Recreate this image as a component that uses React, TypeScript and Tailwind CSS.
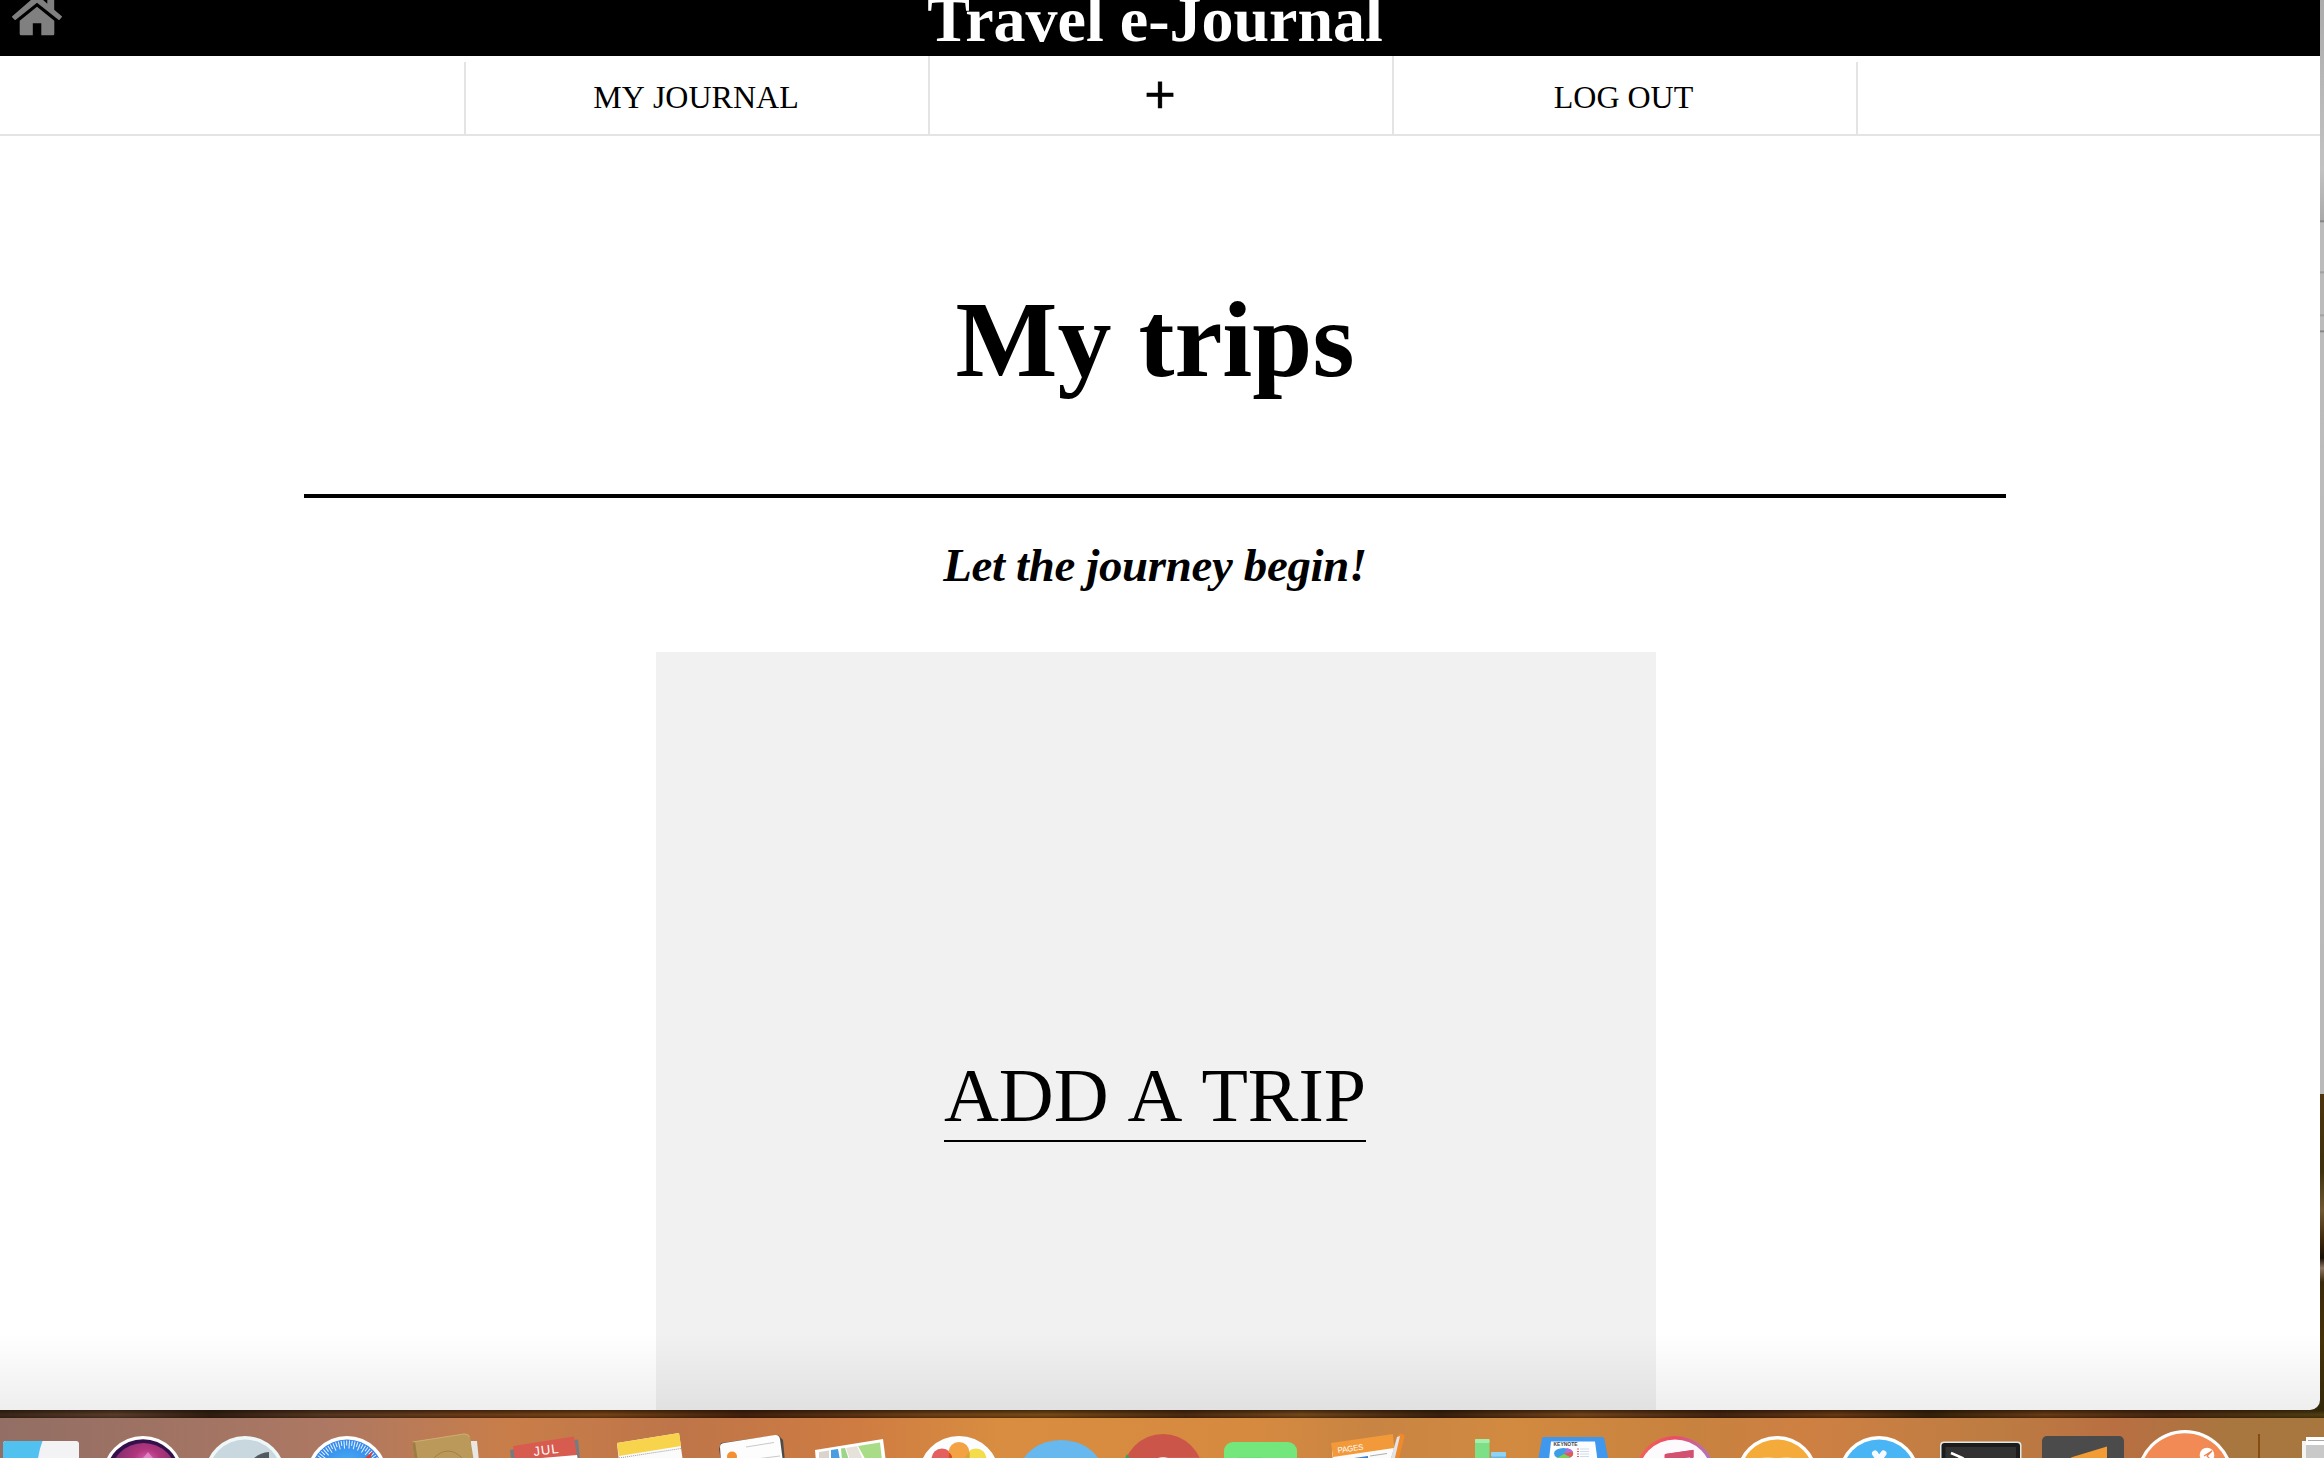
import React from "react";

type IconProps = { x: number; children: React.ReactNode };

/* One 102px dock slot; drawings use screen coordinates through the viewBox. */
function Slot({ x, children }: IconProps) {
  return (
    <svg viewBox={`${x} 1418 102 40`} className="block h-10 w-[102px] shrink-0 overflow-visible">
      {children}
    </svg>
  );
}

function HomeIcon() {
  return (
    <svg viewBox="0 0 64 56" className="block h-14 w-16" fill="#808080">
      <path d="M37 6.7 54.3 20.8V34Q54.3 35.3 53 35.3H41.3V23.2H32.8V35.3H21Q19.7 35.3 19.7 34V20.8Z" />
      <path d="M12.2 16.2 33 -1.8Q37 -5 41 -1.8L47.3 3.7V-6H54.2V9.8L61.8 16.2Q62.2 16.7 61.7 17.3L59.6 19.8Q59 20.3 58.4 19.8L37 2.8 15.8 19.8Q15.2 20.3 14.6 19.8L12.3 17.5Q11.8 16.8 12.2 16.2Z" />
    </svg>
  );
}

const ticks = Array.from({ length: 31 }, (_, i) => -68 + i * 4.5);

function Dock() {
  return (
    <footer className="h-10 w-full overflow-hidden bg-[linear-gradient(90deg,#926e64_0%,#ad7863_14%,#c97e49_22%,#be7549_29%,#cf7c42_37%,#d88d40_43%,#d68a40_54%,#c88443_59%,#d28a40_65%,#c8823f_73%,#ce8043_78%,#bd7c42_86%,#b96f42_91%,#a8763f_96%,#a8763f_100%)]">
      <div className="-ml-[10px] flex">
        <Slot x={-10}>
          <path d="M3 1462V1444Q3 1441 6 1441H76Q79 1441 79 1444V1462Z" fill="#f3f3f6" />
          <path d="M3 1462V1444Q3 1441 6 1441H42.5Q39 1450 37.5 1462Z" fill="#51c1f0" />
        </Slot>
        <Slot x={92}>
          <defs>
            <radialGradient id="siri" cx=".55" cy=".3" r=".6">
              <stop offset="0" stopColor="#e46bc0" />
              <stop offset=".35" stopColor="#b0367d" />
              <stop offset="1" stopColor="#6e2a66" />
            </radialGradient>
          </defs>
          <circle cx="143" cy="1476.5" r="40.5" fill="#fff" />
          <circle cx="143" cy="1476.5" r="37.3" fill="#35114b" />
          <circle cx="143.5" cy="1476.5" r="33.5" fill="url(#siri)" />
          <path d="m143 1458 5-6 5 6z" fill="#f2a5dd" opacity=".6" />
        </Slot>
        <Slot x={194}>
          <circle cx="245" cy="1476.5" r="40.5" fill="#eef8f9" />
          <circle cx="245" cy="1476.5" r="37" fill="#c9d7de" />
          <path d="M253 1459Q260 1452.500 269 1452V1459Z" fill="#535a5e" />
        </Slot>
        <Slot x={296}>
          <defs>
            <radialGradient id="safari" cx=".5" cy=".4" r=".6">
              <stop offset="0" stopColor="#4bb8f6" />
              <stop offset="1" stopColor="#2b6fe6" />
            </radialGradient>
          </defs>
          <circle cx="347" cy="1476.5" r="40.5" fill="#fff" />
          <circle cx="347" cy="1476.5" r="37" fill="url(#safari)" />
          {ticks.map((a, i) => (
            <path key={a} d={`M347 1440.500v${i % 2 ? 5 : 8}`} transform={`rotate(${a} 347 1476.5)`} stroke="#e8f5ff" strokeWidth="1" />
          ))}
          <path d="m364 1459 9-8-3 8z" fill="#e5392e" />
        </Slot>
        <Slot x={398}>
          <path d="m471 1441 6 0 2 20h-8z" fill="#e9e7e4" />
          <path d="M412 1442 464 1434Q469 1433 470 1437L474 1462H415Z" fill="#bb995b" />
          <path d="M412 1442 415 1441.500 418 1462H415Z" fill="#9e7d42" />
          <path d="M432 1460Q448 1442 464 1460" fill="none" stroke="#a18148" />
          <path d="M412.500 1442 464 1434Q468 1433.500 469.500 1437" fill="none" stroke="#cdae72" />
        </Slot>
        <Slot x={500}>
          <path d="m510 1450 5-1v10h-4zM574 1440l4-.5 2 20h-5z" fill="#757b82" />
          <path d="M513 1446 574 1436.500 578 1462H515Z" fill="#d85b50" />
          <path d="m530 1459 47-4 1 6z" fill="#fff" />
          <text x="534" y="1456" transform="rotate(-7 534 1456)" textLength="25" className="fill-white font-['Liberation_Sans'] text-[13px]">JUL</text>
        </Slot>
        <Slot x={602}>
          <path d="M617 1443 679 1433 683 1462H619Z" fill="#fbfbfb" />
          <path d="M617 1443 679 1433 681 1446 619 1456Z" fill="#f8d34c" />
          <path d="m619 1458 62-9.500" stroke="#999" strokeDasharray="1 1" />
        </Slot>
        <Slot x={704}>
          <path d="M719 1449 721 1443 778 1435 783 1440 785 1462H721Z" fill="#4d4a49" />
          <path d="M721 1462 720 1447Q720 1443.500 724 1443L775 1435Q779 1434.500 780 1439L783 1462Z" fill="#fdfdfd" />
          <circle cx="732" cy="1456.500" r="5" fill="#f4902e" />
          <path d="m746 1447 28-4.500M748 1460l32-4" stroke="#c9c9c9" />
        </Slot>
        <Slot x={806}>
          <path d="M815 1450 883 1439 886 1462H816Z" fill="#fff" />
          <path d="M819 1452 829 1450.500V1460H819Z" fill="#d9d5cc" />
          <path d="m831 1450 7-1 2 11h-9z" fill="#4a9ee0" />
          <path d="m841 1448.500 4-.6 4 12h-7z" fill="#9bd587" />
          <path d="m846 1448 11-2 6 14h-13z" fill="#e6e2da" />
          <path d="m858 1446 22-3.500 2 18h-16z" fill="#a8dc87" />
        </Slot>
        <Slot x={908}>
          <circle cx="959" cy="1476.500" r="40.500" fill="#fcfdfe" />
          <circle cx="942" cy="1459" r="10.500" fill="#e3605f" />
          <circle cx="976" cy="1459" r="10.500" fill="#f3dd4b" />
          <rect x="948.500" y="1442" width="21" height="26" rx="10.500" fill="#f3a343" />
          <path d="M948.500 1452Q953 1455 952 1460H948.500Z" fill="#d84a26" />
          <path d="M969.500 1452Q965 1456 965 1460H969.500Z" fill="#cfa83a" />
        </Slot>
        <Slot x={1010}>
          <ellipse cx="1061" cy="1474" rx="42" ry="34" fill="#66b8ef" />
        </Slot>
        <Slot x={1112}>
          <circle cx="1163" cy="1474" r="40" fill="#cc5549" />
          <path d="m1124 1460 3-6 4 6z" fill="#37a264" />
          <path d="M1163 1457.500H1201V1460H1163Z" fill="#d9695f" />
          <ellipse cx="1163" cy="1460" rx="7" ry="3" fill="#f1d8d3" />
        </Slot>
        <Slot x={1214}>
          <rect x="1224" y="1442" width="73" height="40" rx="9" fill="#73e77c" />
          <path d="M1238 1457.500h24v2h-24z" fill="#65d96f" />
        </Slot>
        <Slot x={1316}>
          <path d="M1332 1450 1393 1443 1396 1462H1333Z" fill="#fbfbfb" />
          <path d="M1331 1443 1393 1434 1394 1448 1333 1457Z" fill="#f2993a" />
          <text x="1338" y="1453" transform="rotate(-8 1338 1453)" textLength="26" className="fill-white font-['Liberation_Sans'] text-[8px]">PAGES</text>
          <path d="m1354 1458 14-2v3h-14z" fill="#3d7fd0" />
          <path d="m1370 1456 17-2.500" stroke="#999" strokeWidth=".8" />
          <path d="M1390 1462 1397 1438Q1398 1433 1402 1434 1406 1435 1404 1439L1398 1462Z" fill="#ee8a2c" />
          <path d="M1390 1462 1397 1437 1400 1436 1394 1462Z" fill="#dfe5ec" />
        </Slot>
        <Slot x={1418}>
          <rect x="1475" y="1439" width="14.500" height="22" rx="1" fill="#7ddf86" />
          <rect x="1475" y="1439" width="14.500" height="4" rx="1" fill="#a4efaa" />
          <rect x="1491" y="1452" width="15" height="10" rx="1" fill="#68b6e2" />
          <rect x="1491" y="1452" width="15" height="4.500" rx="1" fill="#8fd3f4" />
        </Slot>
        <Slot x={1520}>
          <path d="M1538 1460 1542 1438.500Q1542.300 1437 1544 1437H1602Q1604 1437 1604.300 1438.500L1608.500 1460Z" fill="#3f97ee" />
          <path d="M1551 1441.500H1595L1597.500 1460H1549Z" fill="#fbfdff" />
          <text x="1553.500" y="1446" textLength="24" lengthAdjust="spacingAndGlyphs" className="fill-[#444] font-['Liberation_Sans'] text-[5px] font-bold">KEYNOTE</text>
          <ellipse cx="1563.500" cy="1453.500" rx="9.500" ry="5.500" fill="#3d9ee8" />
          <path d="m1564 1453.500 3-5.500q5 1 6 4z" fill="#b66bd6" />
          <path d="m1564 1453.500 9-1.500q1 4-3 5.500z" fill="#e8584d" />
          <path d="m1564 1454 6 3q-5 4-13 1z" fill="#7ccf56" />
          <path d="M1577 1449h2m-2 2.500h2m-2 2.500h2m-2 2.500h2" stroke="#df5d68" />
          <path d="M1580 1449h9m-9 2.500h9m-9 2.500h9m-9 2.500h9" stroke="#c7d3df" strokeWidth=".8" />
        </Slot>
        <Slot x={1622}>
          <defs>
            <linearGradient id="tunes">
              <stop offset="0" stopColor="#f0655a" />
              <stop offset=".5" stopColor="#ea4d63" />
              <stop offset="1" stopColor="#a87cc8" />
            </linearGradient>
            <linearGradient id="note">
              <stop offset="0" stopColor="#e5485c" />
              <stop offset="1" stopColor="#c85a8e" />
            </linearGradient>
          </defs>
          <circle cx="1675" cy="1476.500" r="40.500" fill="url(#tunes)" />
          <circle cx="1675" cy="1476.500" r="37" fill="#fcfafc" />
          <path d="M1664.500 1462V1455Q1664.500 1454 1666 1453.700L1693.500 1449.800V1462H1690V1457L1668 1460V1462Z" fill="url(#note)" />
          <path d="M1666 1454 1693.500 1450V1457L1666 1460Z" fill="#d45070" />
        </Slot>
        <Slot x={1724}>
          <circle cx="1777" cy="1476.500" r="40.500" fill="#fff" />
          <circle cx="1777" cy="1476.500" r="37" fill="#f4ab3a" />
          <path d="M1760 1459q8-2.500 15 0m4 0q8-2.500 14 0" stroke="#fbc873" strokeWidth="1.500" fill="none" />
        </Slot>
        <Slot x={1826}>
          <circle cx="1879" cy="1476.500" r="40.500" fill="#fff" />
          <circle cx="1879" cy="1476.500" r="37" fill="#49b5f4" />
          <path d="M1875 1453.500 1880 1461M1883.500 1453.500 1878 1461" stroke="#f6faff" strokeWidth="6" strokeLinecap="round" />
        </Slot>
        <Slot x={1928}>
          <rect x="1940" y="1441.500" width="81.500" height="40" rx="4" fill="#dfe8e5" />
          <rect x="1941.500" y="1443" width="78.500" height="40" rx="3" fill="#1c1c1c" />
          <rect x="1945.500" y="1447" width="70.500" height="40" fill="#323232" />
          <path d="m1951 1453 10.500 4.500-6 3" stroke="#fff" strokeWidth="2.500" fill="none" />
        </Slot>
        <Slot x={2030}>
          <rect x="2042" y="1436" width="82" height="40" rx="5" fill="#4b4b4b" />
          <path d="M2070 1459Q2070 1457.500 2074 1456.500L2107 1446.500V1462H2070Z" fill="#f39b35" />
        </Slot>
        <Slot x={2132}>
          <circle cx="2185" cy="1478.500" r="48.500" fill="#fff" />
          <circle cx="2185" cy="1478.500" r="45.300" fill="#f18a54" />
          <circle cx="2207" cy="1455" r="7.300" fill="#fff" />
          <path d="m2204 1456 8-5-5 5 4 4" stroke="#e8814d" strokeWidth="1.200" fill="none" />
        </Slot>
        <Slot x={2234}>
          <path d="M2258 1434h2v24h-2z" fill="#874c12" />
          <path d="M2302 1441h30v20h-30z" fill="#f4f4f4" />
          <path d="M2306 1437h30v24h-30z" fill="#fff" />
          <path d="M2308 1440.500h20" stroke="#aaa" />
          <path d="M2306 1445h20v14h-20z" fill="#c9c9c9" />
        </Slot>
      </div>
    </footer>
  );
}

function NavCell({ children, tall }: { children?: React.ReactNode; tall?: boolean }) {
  return (
    <li
      className={
        tall
          ? "flex h-[78px] w-[464px] justify-center border-r-2 border-[#e4e4e4]"
          : "mt-1.5 flex h-[72px] w-[464px] justify-center border-r-2 border-[#e4e4e4]"
      }
    >
      {children}
    </li>
  );
}

export default function App() {
  return (
    <div className="flex h-[1458px] w-[2324px] flex-col overflow-hidden bg-[#3b220d] font-['Liberation_Serif',serif] text-black">
      <div className="flex h-[1410px] bg-[linear-gradient(180deg,#acacac_0px,#c2c2c2_170px,#aaa_220px,#777_221px,#bcbcbc_223px,#bcbcbc_271px,#999_272px,#bcbcbc_274px,#bcbcbc_314px,#999_315px,#bcbcbc_317px,#bcbcbc_330px,#777_331px,#bcbcbc_333px,#b9b9b9_1094px,#4c320d_1094px,#3d300e_1170px,#6f5833_1210px,#3d270b_1240px,#171006_1258px,#8c7562_1268px,#3a290b_1282px,#443109_1340px,#33280b_1410px)]">
        <main className="relative flex h-[1410px] w-[2320px] flex-col overflow-hidden rounded-br-[10px] bg-white">
          <header className="relative flex h-14 shrink-0 justify-center overflow-hidden bg-black">
            <div className="absolute top-0 left-0">
              <HomeIcon />
            </div>
            <h1 className="-mt-[17px] -ml-2.5 h-[74px] text-[64px] leading-[74px] font-bold whitespace-nowrap text-white">
              Travel e-Journal
            </h1>
          </header>
          <nav className="h-20 shrink-0 border-b-2 border-[#e4e4e4]">
            <ul className="flex pl-0.5 text-[32px] leading-[36px] [font-kerning:none]">
              <NavCell />
              <NavCell tall>
                <span className="mt-[23px] mr-[2px]">MY JOURNAL</span>
              </NavCell>
              <NavCell tall>
                <span className="mt-[14px] mr-[2px] font-['Liberation_Sans',sans-serif] text-[54px] leading-[48px] [-webkit-text-stroke:0.4px_black]">+</span>
              </NavCell>
              <NavCell>
                <span className="mt-[17px] mr-[3px]">LOG OUT</span>
              </NavCell>
            </ul>
          </nav>
          <section className="flex flex-col items-center pr-[10px]">
            <h2 className="mt-[142px] h-[124px] text-[108px] leading-[124px] font-bold">My trips</h2>
            <hr className="mt-[92px] h-1 w-[1702px] border-0 bg-black" />
            <p className="mt-[39px] h-[56px] text-[46.8px] leading-[56px] font-bold tracking-[-0.3px] italic">Let the journey begin!</p>
            <div className="ml-[2px] mt-[59px] flex h-[1000px] w-[1000px] flex-col items-center bg-[#f1f1f1]">
              <a className="mt-[399px] -ml-0.5 flex h-[91px] w-[422px] justify-center border-b-2 border-black text-[76px] leading-[88px] whitespace-nowrap [font-kerning:none]">
                ADD A TRIP
              </a>
            </div>
          </section>
          <div className="pointer-events-none absolute inset-x-0 bottom-0 h-[76px] bg-linear-to-b from-transparent to-black/[0.067]" />
        </main>
      </div>
      <div className="h-2 w-full bg-[linear-gradient(180deg,#1c0f0599,transparent_60%,#23120566),linear-gradient(90deg,#3a2719,#5a3d2b_5%,#2f1d11_9%,#563722_14%,#6b3b17_20%,#774416_26%,#42200d_32%,#6f4116_40%,#7a4b16_45%,#4b2a10_51%,#75481a_56%,#38200d_62%,#75451a_68%,#422410_74%,#6a3914_79%,#332109_83%,#693c15_88%,#472710_93%,#4f3e11_100%)]" />
      <Dock />
    </div>
  );
}
